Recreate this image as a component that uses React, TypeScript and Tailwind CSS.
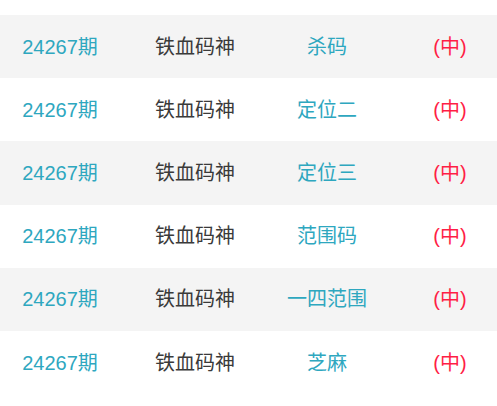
const rows = [
  { issue: "24267期", name: "铁血码神", type: "杀码" },
  { issue: "24267期", name: "铁血码神", type: "定位二" },
  { issue: "24267期", name: "铁血码神", type: "定位三" },
  { issue: "24267期", name: "铁血码神", type: "范围码" },
  { issue: "24267期", name: "铁血码神", type: "一四范围" },
  { issue: "24267期", name: "铁血码神", type: "芝麻" },
];

export default function App() {
  return (
    <div
      className="w-[497px] h-[406px] bg-white pt-[15px] text-[20px]"
      style={{ fontFamily: '"Liberation Sans", "Noto Sans CJK SC", sans-serif' }}
    >
      {rows.map((row, i) => (
        <div
          key={i}
          className={`flex items-center h-[63.2px] ${i % 2 === 0 ? "bg-[#f4f4f4]" : "bg-white"}`}
        >
          <div className="w-[120px] text-center text-[#2ea7bf]">{row.issue}</div>
          <div className="w-[150px] text-center text-[#3a3a3a]">{row.name}</div>
          <div className="w-[114px] text-center text-[#2ea7bf]">{row.type}</div>
          <div className="flex-1 pl-[19px] text-center text-[#ff1e46]">(中)</div>
        </div>
      ))}
    </div>
  );
}
